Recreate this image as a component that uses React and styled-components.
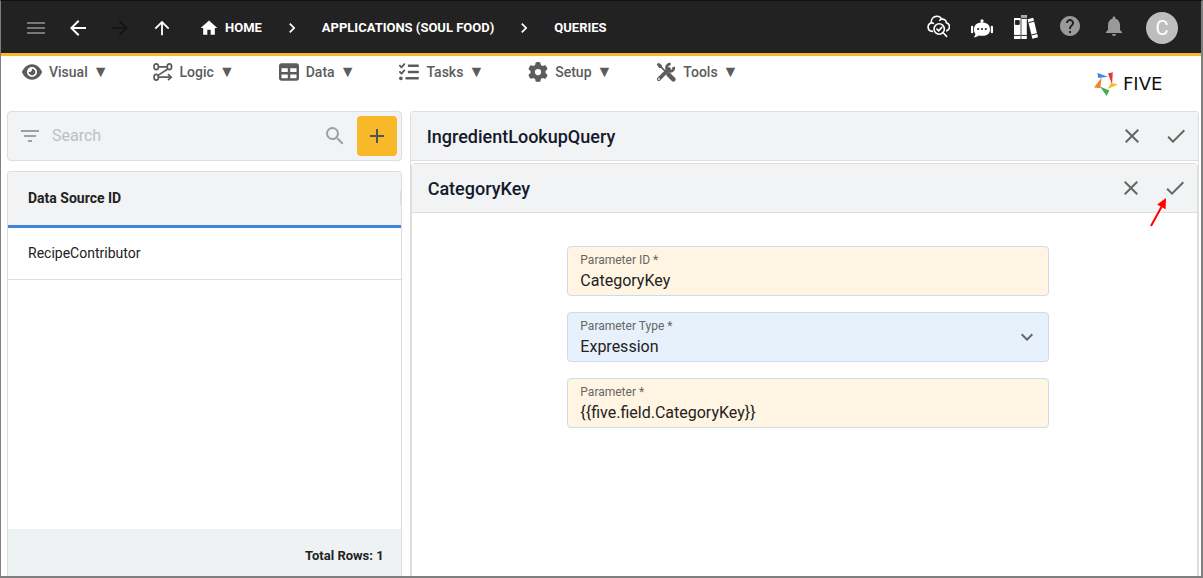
import React from 'react';
import styled, { createGlobalStyle } from 'styled-components';
import {
  MdMenu, MdArrowBack, MdArrowForward, MdArrowUpward, MdHome, MdChevronRight,
  MdHelp, MdNotifications, MdFilterList, MdSearch, MdAdd, MdClose, MdCheck,
  MdExpandMore,
} from 'react-icons/md';
import { FaEye, FaTable, FaListCheck, FaGear } from 'react-icons/fa6';

const LogicIcon = () => (
  <svg width="20" height="20" viewBox="0 0 20 20" fill="none" stroke="currentColor" strokeWidth="1.7">
    <ellipse cx="3.2" cy="4.8" rx="2.2" ry="2.9" />
    <ellipse cx="16.4" cy="4.8" rx="2.2" ry="2.9" />
    <ellipse cx="3.2" cy="15.2" rx="2.2" ry="2.9" />
    <path d="M5.4 4.8H14.2M14.8 7L5 13.4M5.4 15.2H18M15 12.2L18.2 15.2L15 18.2" />
  </svg>
);

const ToolsIcon = () => (
  <svg width="20" height="20" viewBox="0 0 20 20" fill="none" stroke="currentColor">
    <path d="M.8 2.6L2.6.8L6 3.2V4.8L10.6 9.4L9.4 10.6L4.8 6H3.2Z" fill="currentColor" stroke="none" />
    <path d="M12.6 12.6L17.4 17.4" strokeWidth="4.4" strokeLinecap="round" />
    <path d="M2.8 17.2L13 7" strokeWidth="3.8" strokeLinecap="round" />
    <path d="M17.6 4.8A3.6 3.6 0 1 1 14.6 2.2" strokeWidth="2.8" />
    <circle cx="3" cy="17" r=".9" fill="#fff" stroke="none" />
  </svg>
);

const CloudSearchIcon = () => (
  <svg width="24" height="24" viewBox="0 0 24 24" fill="none" stroke="currentColor" strokeWidth="1.6" strokeLinecap="round">
    <path d="M6.4 17.4C3.4 17 2 15 2.1 12.8C2.2 10.8 3.4 9.4 5.2 9C5 5.4 7.2 2.8 10 2.4C12.4 2 14.4 3 15.6 5.2C18.2 4.8 20.2 6.4 20.4 8.8C22.4 9.4 23.6 11 23.5 13C23.4 14.8 22.4 16 20.8 16.8" />
    <path d="M5.2 9C6 8.8 6.8 8.9 7.4 9.3M15.6 5.2C14.8 5.4 14.2 5.8 13.8 6.4" />
    <circle cx="13.2" cy="15" r="5.2" />
    <path d="M10.8 15L12.6 16.8L15.8 13.4M17.2 18.8L20.6 22.4" />
  </svg>
);

const BotIcon = () => (
  <svg width="24" height="24" viewBox="0 -3 24 24" fill="currentColor">
    <circle cx="12" cy="3.8" r="1.6" />
    <path d="M11.4 5H12.6V7H11.4Z" />
    <path d="M12 5.6C17 5.6 20 8 20 12.4C20 16.8 17 18.8 12 18.8C10.8 18.8 9.8 18.7 8.8 18.4C7.4 19.6 5.8 20.2 3.8 20.2C5 19.2 5.4 18 5.3 16.8C4.4 15.6 4 14.2 4 12.4C4 8 7 5.6 12 5.6Z" />
    <rect x="1" y="8.8" width="2.2" height="7.4" rx="1" />
    <rect x="20.8" y="8.8" width="2.2" height="7.4" rx="1" />
    <g fill="#222">
      <circle cx="8.2" cy="12" r="1.1" />
      <circle cx="12" cy="12" r="1.1" />
      <circle cx="15.8" cy="12" r="1.1" />
    </g>
  </svg>
);

const BooksIcon = () => (
  <svg width="26" height="28" viewBox="0 -2 26 28" fill="currentColor">
    <path d="M1 4H7.6V25H1Z" />
    <path d="M8.4 1H13.8V25H8.4Z" />
    <path d="M14.6 5.2L20.2 3.8L25 23.2L19.4 24.8Z" />
    <path d="M8.4 1H13.8V4H8.4Z" fill="#aaa" />
    <g stroke="#222" strokeWidth="1" fill="none">
      <path d="M2.4 6.6H6.2V10.4H2.4Z" fill="#222" />
      <path d="M1 21.4H7.6M8.4 4.4H13.8M8.4 21.4H13.8M15.6 8.6L21.2 7.2M18.4 21L24 19.6" />
    </g>
  </svg>
);

const FiveMark = () => (
  <svg width="24" height="24" viewBox="0 0 24 24">
    <path d="M3.4 1L14 4.8L4.2 6Z" fill="#3f86dc" />
    <path d="M14 1.6L18.8.2L18 12.4Z" fill="#e5353b" />
    <path d="M24 12.4L13.6 17L17 10.8Z" fill="#fbbc2c" />
    <path d="M6 14.6L15.4 18.4L12.6 24Z" fill="#3fae5a" />
    <path d="M7.6 5.6L6.4 16.2L0 15.6Z" fill="#f58233" />
  </svg>
);

const RedArrow = () => (
  <Pointer width="20" height="32" viewBox="0 0 20 32" aria-hidden="true">
    <path d="M2 30L13 10" stroke="#f00" strokeWidth="2" />
    <path d="M17 2L16.6 13.2L8.2 8.6Z" fill="#f00" />
  </Pointer>
);

const menus = [
  { label: 'Visual', icon: <FaEye /> },
  { label: 'Logic', icon: <LogicIcon /> },
  { label: 'Data', icon: <FaTable /> },
  { label: 'Tasks', icon: <FaListCheck /> },
  { label: 'Setup', icon: <FaGear /> },
  { label: 'Tools', icon: <ToolsIcon /> },
];

class App extends React.Component {
  constructor(props) {
    super(props);
    this.state = {
      search: '',
      parameterId: 'CategoryKey',
      parameterType: 'Expression',
      parameter: '{{five.field.CategoryKey}}',
    };
  }

  update(field) {
    return e => this.setState({ [field]: e.target.value });
  }

  renderFormHeader(title, pointed) {
    return (
      <FormHeader>
        <FormTitle>{title}</FormTitle>
        <IconButton aria-label="Cancel"><MdClose /></IconButton>
        <IconButton aria-label="Save">
          <MdCheck />
          {pointed && <RedArrow />}
        </IconButton>
      </FormHeader>
    );
  }

  render() {
    const { search, parameterId, parameterType, parameter } = this.state;

    return (
      <Page>
        <GlobalStyle />
        <TopBar>
          <NavButtons>
            <IconButton aria-label="Menu" $color="#777"><MdMenu /></IconButton>
            <IconButton aria-label="Back" $color="#fff"><MdArrowBack /></IconButton>
            <IconButton aria-label="Forward" $color="#161616" disabled><MdArrowForward /></IconButton>
            <IconButton aria-label="Up" $color="#fff" $size={22}><MdArrowUpward /></IconButton>
          </NavButtons>
          <Crumbs>
            <Crumb href="#home"><MdHome size={20} />HOME</Crumb>
            <MdChevronRight size={20} />
            <Crumb href="#applications">APPLICATIONS (SOUL FOOD)</Crumb>
            <MdChevronRight size={20} />
            <Crumb href="#queries">QUERIES</Crumb>
          </Crumbs>
          <Actions>
            <IconButton aria-label="Inspect" $color="#fff"><CloudSearchIcon /></IconButton>
            <IconButton aria-label="Assistant" $color="#fff"><BotIcon /></IconButton>
            <IconButton aria-label="Library" $color="#fff"><BooksIcon /></IconButton>
            <IconButton aria-label="Help" $color="#999"><MdHelp /></IconButton>
            <IconButton aria-label="Notifications" $color="#999"><MdNotifications /></IconButton>
          </Actions>
          <Avatar>C</Avatar>
        </TopBar>

        <MenuBar>
          <Menus>
            {menus.map(({ label, icon }) => (
              <MenuButton key={label}>
                {icon}
                <span>{label}</span>
                <Caret>▼</Caret>
              </MenuButton>
            ))}
          </Menus>
          <Logo href="#five">
            <FiveMark />
            <Wordmark>FIVE</Wordmark>
          </Logo>
        </MenuBar>

        <Content>
          <ListPane>
            <SearchBar>
              <MdFilterList size={24} />
              <SearchInput
                type="text"
                aria-label="Search"
                placeholder="Search"
                value={search}
                onChange={this.update('search')}
              />
              <MdSearch size={24} />
              <AddButton aria-label="Add"><MdAdd size={24} /></AddButton>
            </SearchBar>
            <TableCard>
              <Table>
                <thead>
                  <tr><HeadCell><HeadInner>Data Source ID<Resizer /></HeadInner></HeadCell></tr>
                </thead>
                <tbody>
                  <tr><Cell>RecipeContributor</Cell></tr>
                </tbody>
              </Table>
              <TableFooter>Total Rows: 1</TableFooter>
            </TableCard>
          </ListPane>

          <FormCard>
            {this.renderFormHeader('IngredientLookupQuery')}
            <InnerCard>
              {this.renderFormHeader('CategoryKey', true)}
              <FormBody>
                <Form>
                  <Field>
                    <Label htmlFor="parameter-id">Parameter ID *</Label>
                    <Input
                      id="parameter-id"
                      type="text"
                      value={parameterId}
                      onChange={this.update('parameterId')}
                    />
                  </Field>
                  <Field $blue>
                    <Label htmlFor="parameter-type">Parameter Type *</Label>
                    <Select
                      id="parameter-type"
                      value={parameterType}
                      onChange={this.update('parameterType')}
                    >
                      <option>Expression</option>
                    </Select>
                    <SelectArrow size={24} />
                  </Field>
                  <Field>
                    <Label htmlFor="parameter">Parameter *</Label>
                    <Input
                      id="parameter"
                      type="text"
                      value={parameter}
                      onChange={this.update('parameter')}
                    />
                  </Field>
                </Form>
              </FormBody>
            </InnerCard>
          </FormCard>
        </Content>
      </Page>
    );
  }
}

export default App;

const GlobalStyle = createGlobalStyle`
  * {
    box-sizing: border-box;
  }
  body {
    margin: 0;
    background: #fff;
    color: #222;
    font-family: Roboto, "Liberation Sans", sans-serif;
    font-size: 14px;
  }
  button, input, select {
    margin: 0;
    padding: 0;
    border: none;
    outline: none;
    background: none;
    color: inherit;
    font-family: inherit;
  }
  svg {
    display: block;
    flex-shrink: 0;
  }
`;

const Page = styled.div`
  display: flex;
  flex-direction: column;
  height: 100vh;
  overflow: hidden;
  border: solid #7f7f7f;
  border-width: 1px 2px 2px 1px;
  border-top-color: #111;
`;

const TopBar = styled.header`
  display: flex;
  align-items: center;
  height: 55px;
  flex-shrink: 0;
  padding: 2px 23px 0;
  background: #222;
  border-bottom: 3px solid #f7b82a;
  color: #fff;
`;

const IconButton = styled.button`
  position: relative;
  display: flex;
  align-items: center;
  justify-content: center;
  width: 24px;
  height: 24px;
  color: ${p => p.$color || '#666'};
  font-size: ${p => p.$size || 24}px;
`;

const NavButtons = styled.nav`
  display: flex;
  gap: 18px;
`;

const Crumbs = styled.nav`
  display: flex;
  align-items: center;
  gap: 20px;
  margin-left: 25px;
`;

const Crumb = styled.a`
  display: flex;
  align-items: center;
  gap: 6px;
  color: #fff;
  font-size: 13px;
  font-weight: 700;
  line-height: 20px;
  text-decoration: none;
  white-space: nowrap;
`;

const Actions = styled.div`
  display: flex;
  gap: 20px;
  margin-left: auto;
  padding-bottom: 4px;
`;

const Avatar = styled.div`
  display: flex;
  align-items: center;
  justify-content: center;
  width: 32px;
  height: 32px;
  margin-left: 20px;
  border-radius: 50%;
  background: #bdbdbd;
  font-size: 20px;
`;

const MenuBar = styled.div`
  display: flex;
  justify-content: space-between;
  height: 55px;
  flex-shrink: 0;
  padding: 6px 20px 0 21px;
`;

const Menus = styled.nav`
  display: flex;
  align-items: flex-start;
  gap: 44px;
`;

const MenuButton = styled.button`
  display: flex;
  align-items: center;
  gap: 7px;
  color: #5c5c5c;
  font-size: 14px;
  font-weight: 500;
  line-height: 20px;

  svg {
    width: 20px;
    height: 20px;
  }
`;

const Caret = styled.span`
  margin-left: -2px;
  font-size: 16px;
`;

const Logo = styled.a`
  display: flex;
  align-items: center;
  align-self: flex-start;
  gap: 5px;
  padding-top: 10px;
  text-decoration: none;
`;

const Wordmark = styled.span`
  width: 58px;
  color: #111;
  font-family: "DejaVu Sans", sans-serif;
  font-size: 18px;
  line-height: 24px;
`;

const Content = styled.main`
  display: grid;
  grid-template-columns: 1fr 2fr;
  gap: 8px;
  flex: 1;
  min-height: 0;
  padding: 0 2px 0 6px;
`;

const ListPane = styled.section`
  display: flex;
  flex-direction: column;
  gap: 10px;
  min-width: 0;
`;

const SearchBar = styled.div`
  display: flex;
  align-items: center;
  height: 50px;
  flex-shrink: 0;
  padding: 0 4px 0 10px;
  border: 1px solid #ddd;
  border-radius: 4px;
  background: #f1f3f5;
  color: #98a1a8;
`;

const SearchInput = styled.input`
  flex: 1;
  min-width: 0;
  margin-left: 10px;
  padding-bottom: 2px;
  font-size: 16px;

  &::placeholder {
    color: #bcc0c3;
    opacity: 1;
  }
`;

const AddButton = styled.button`
  display: flex;
  align-items: center;
  justify-content: center;
  width: 40px;
  height: 40px;
  margin-left: 10px;
  border-radius: 4px;
  background: #f7b82a;
  color: #555;
`;

const TableCard = styled.div`
  display: flex;
  flex-direction: column;
  justify-content: space-between;
  flex: 1;
  border: 1px solid #ddd;
  border-bottom: none;
  border-radius: 4px 4px 0 0;
  overflow: hidden;
`;

const Table = styled.table`
  width: 100%;
  border-collapse: separate;
  border-spacing: 0;
  text-align: left;
`;

const HeadCell = styled.th`
  height: 56px;
  padding: 0 0 2px 20px;
  background: #f1f3f5;
  border-bottom: 3px solid #4285d8;
`;

const HeadInner = styled.div`
  display: flex;
  align-items: center;
  justify-content: space-between;
`;

const Resizer = styled.span`
  width: 1px;
  height: 14px;
  background: #ddd;
`;

const Cell = styled.td`
  height: 52px;
  padding: 0 20px 2px;
  border-bottom: 1px solid #ddd;
`;

const TableFooter = styled.div`
  padding: 17px 17px 10px;
  background: #eef2f3;
  font-size: 13px;
  font-weight: 700;
  line-height: 20px;
  text-align: right;
`;

const FormCard = styled.section`
  display: flex;
  flex-direction: column;
  min-width: 0;
  border: 1px solid #ddd;
  border-bottom: none;
  border-radius: 4px 4px 0 0;
`;

const InnerCard = styled.div`
  flex: 1;
  margin-top: 2px;
  border: 1px solid #ddd;
  border-bottom: none;
  border-radius: 4px 4px 0 0;
`;

const FormHeader = styled.div`
  display: flex;
  align-items: center;
  gap: 20px;
  height: 49px;
  padding: 0 10px 0 16px;
  background: #f1f3f5;
  border-bottom: 1px solid #ddd;
`;

const FormTitle = styled.h2`
  flex: 1;
  margin: 0;
  color: #14192b;
  font-size: 18px;
  font-weight: 500;
`;

const Pointer = styled.svg`
  position: absolute;
  top: 20px;
  left: -14px;
`;

const FormBody = styled.div`
  padding: 33px 0 0 8px;
`;

const Form = styled.form`
  display: flex;
  flex-direction: column;
  gap: 16px;
  width: 62%;
  margin: 0 auto;
`;

const Field = styled.div`
  position: relative;
  display: flex;
  flex-direction: column;
  height: 50px;
  padding: 4px 12px;
  border: 1px solid #cbdcec;
  border-radius: 4px;
  background: ${p => (p.$blue ? '#e7f1fc' : '#fff5e2')};
`;

const Label = styled.label`
  color: #666;
  font-size: 12px;
  line-height: 18px;
`;

const Input = styled.input`
  height: 22px;
  font-size: 16px;
`;

const Select = styled.select`
  height: 24px;
  appearance: none;
  font-size: 16px;
`;

const SelectArrow = styled(MdExpandMore)`
  position: absolute;
  top: 12px;
  right: 9px;
  color: #666;
  pointer-events: none;
`;
